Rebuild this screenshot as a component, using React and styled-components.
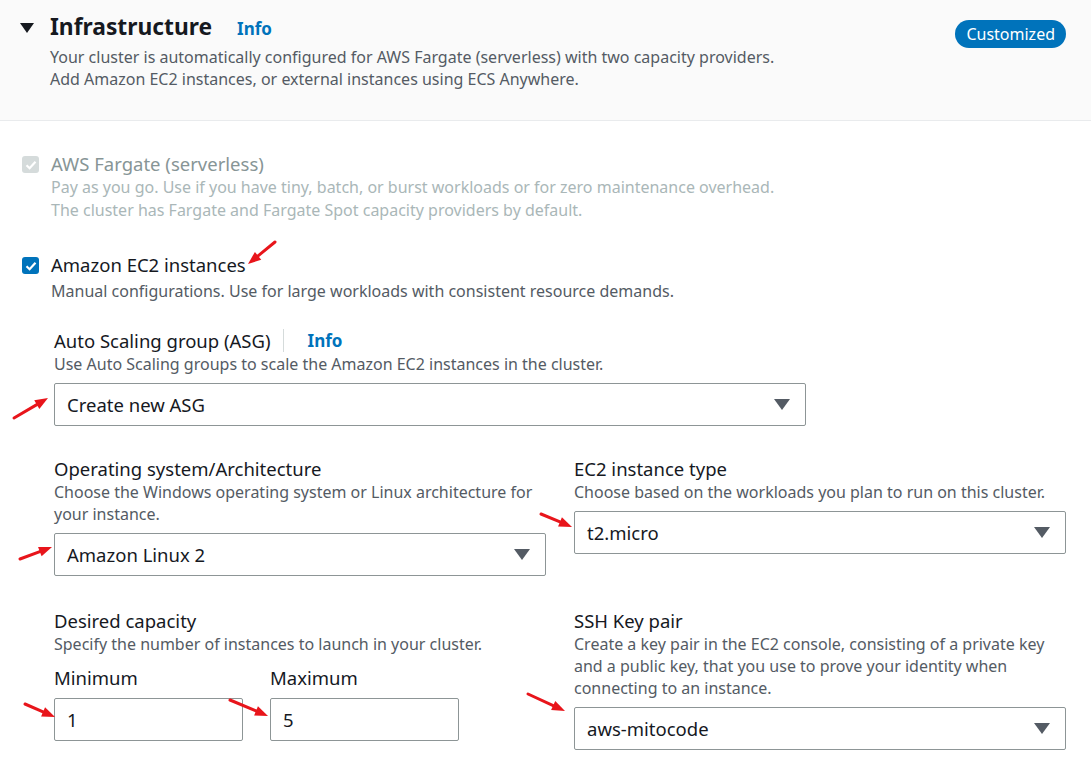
import React from 'react';
import styled, { createGlobalStyle } from 'styled-components';

const GlobalStyle = createGlobalStyle`
	html, body {
		margin: 0;
		padding: 0;
		background: #ffffff;
		font-family: "Noto Sans", "Open Sans", sans-serif;
		color: #16191f;
	}
`;

const Page = styled.div`
	position: relative;
	width: 1091px;
	height: 757px;
	overflow: hidden;
	background: #ffffff;
`;

const Header = styled.div`
	display: flex;
	align-items: flex-start;
	justify-content: space-between;
	height: 121px;
	box-sizing: border-box;
	padding: 12px 25px 0 20px;
	background: #fafafa;
	border-bottom: 1px solid #e9ebed;
`;

const HeaderMain = styled.div`
	display: flex;
	align-items: flex-start;
	gap: 16px;
`;

const Caret = styled.span`
	width: 0;
	height: 0;
	margin-top: 11px;
	border-left: 7px solid transparent;
	border-right: 7px solid transparent;
	border-top: 10px solid #16191f;
`;

const HeaderText = styled.div`
	display: flex;
	flex-direction: column;
`;

const TitleRow = styled.div`
	display: flex;
	align-items: baseline;
	gap: 25px;
`;

const Title = styled.h2`
	margin: 0;
	font-size: 22.8px;
	line-height: 30px;
	font-weight: 700;
`;

const InfoLink = styled.a`
	color: #0073bb;
	font-weight: 700;
	font-size: ${p => p.size || 17}px;
	text-decoration: none;
`;

const Desc = styled.p`
	margin: ${p => p.top || 0}px 0 0;
	font-size: 16px;
	line-height: ${p => p.lh || 22}px;
	color: ${p => (p.disabled ? '#aab7b8' : '#545b64')};
`;

const Badge = styled.span`
	margin-top: 8px;
	padding: 4px 11px 4px;
	border-radius: 16px;
	background: #0073bb;
	color: #ffffff;
	font-size: 16px;
	line-height: 20px;
`;

const Body = styled.div`
	display: flex;
	flex-direction: column;
	padding: 30px 25px 0 22px;
`;

const Option = styled.div`
	display: flex;
	gap: 12px;
	margin-bottom: ${p => p.gap || 0}px;
`;

const Check = styled.span`
	flex: none;
	width: 17px;
	height: 17px;
	margin-top: 5px;
	border-radius: 3px;
	background: ${p => (p.disabled ? '#d5dbdb' : '#0073bb')};
	display: flex;
	align-items: center;
	justify-content: center;
`;

const OptionTitle = styled.div`
	font-size: 18.5px;
	line-height: 25px;
	color: ${p => (p.disabled ? '#879596' : '#16191f')};
`;

const Nested = styled.div`
	display: flex;
	flex-direction: column;
	padding-left: 32px;
`;

const Field = styled.div`
	display: flex;
	flex-direction: column;
`;

const LabelRow = styled.div`
	display: flex;
	align-items: center;
`;

const Label = styled.label`
	font-size: 18.5px;
	line-height: 25px;
	color: #16191f;
`;

const Divider = styled.span`
	width: 1px;
	height: 23px;
	background: #d5dbdb;
	margin: 0 24px 0 12px;
`;

const Select = styled.div`
	display: flex;
	align-items: center;
	justify-content: space-between;
	box-sizing: border-box;
	width: ${p => p.width || '100%'};
	height: 43px;
	margin-top: 8px;
	padding: 0 15px 0 12px;
	border: 1px solid #8d9596;
	border-radius: 2px;
	background: #ffffff;
	font-size: 18.5px;
	color: #16191f;
`;

const Arrow = styled.span`
	width: 0;
	height: 0;
	border-left: 8px solid transparent;
	border-right: 8px solid transparent;
	border-top: 11px solid #545b64;
`;

const Columns = styled.div`
	display: grid;
	grid-template-columns: 492px 492px;
	column-gap: 28px;
	margin-top: ${p => p.top || 0}px;
`;

const Pair = styled.div`
	display: flex;
	gap: 27px;
	margin-top: 10px;
`;

const NumberBox = styled.div`
	display: flex;
	flex-direction: column;
`;

const Input = styled.div`
	box-sizing: border-box;
	width: 189px;
	height: 43px;
	margin-top: 8px;
	padding: 0 12px;
	display: flex;
	align-items: center;
	border: 1px solid #8d9596;
	border-radius: 2px;
	font-size: 18.5px;
`;

const Overlay = styled.svg`
	position: absolute;
	inset: 0;
	pointer-events: none;
`;

function Tick({ color }) {
	return (
		<svg width='12' height='10' viewBox='0 0 12 10'>
			<path d='M1.5 5.2 L4.6 8.2 L10.5 1.8' fill='none' stroke={color} strokeWidth='2.2' />
		</svg>
	);
}

function Dropdown({ value, width }) {
	return (
		<Select width={width}>
			<span>{value}</span>
			<Arrow />
		</Select>
	);
}

const arrows = [
	[275, 242, 248, 264],
	[14, 418, 48, 398],
	[20, 559, 52, 547],
	[541, 514, 572, 527],
	[25, 704, 55, 717],
	[230, 700, 268, 716],
	[528, 694, 565, 711]
];

function Annotations() {
	return (
		<Overlay width='1091' height='757'>
			{arrows.map(([x1, y1, x2, y2], i) => {
				const a = Math.atan2(y2 - y1, x2 - x1);
				const len = 13;
				const w = 5;
				const bx = x2 - len * Math.cos(a);
				const by = y2 - len * Math.sin(a);
				const px = -Math.sin(a) * w;
				const py = Math.cos(a) * w;
				return (
					<g key={i}>
						<line x1={x1} y1={y1} x2={bx} y2={by} stroke='#e8151b' strokeWidth='3' strokeLinecap='round' />
						<polygon points={`${x2},${y2} ${bx + px},${by + py} ${bx - px},${by - py}`} fill='#e8151b' />
					</g>
				);
			})}
		</Overlay>
	);
}

export default function App() {
	return (
		<Page>
			<GlobalStyle />
			<Header>
				<HeaderMain>
					<Caret />
					<HeaderText>
						<TitleRow>
							<Title>Infrastructure</Title>
							<InfoLink>Info</InfoLink>
						</TitleRow>
						<Desc top={4}>
							Your cluster is automatically configured for AWS Fargate (serverless) with two capacity providers.
							<br />
							Add Amazon EC2 instances, or external instances using ECS Anywhere.
						</Desc>
					</HeaderText>
				</HeaderMain>
				<Badge>Customized</Badge>
			</Header>
			<Body>
				<Option gap={30}>
					<Check disabled>
						<Tick color='#ffffff' />
					</Check>
					<div>
						<OptionTitle disabled>AWS Fargate (serverless)</OptionTitle>
						<Desc disabled lh={23}>
							Pay as you go. Use if you have tiny, batch, or burst workloads or for zero maintenance overhead.
							<br />
							The cluster has Fargate and Fargate Spot capacity providers by default.
						</Desc>
					</div>
				</Option>
				<Option gap={26}>
					<Check>
						<Tick color='#ffffff' />
					</Check>
					<div>
						<OptionTitle>Amazon EC2 instances</OptionTitle>
						<Desc top={3}>Manual configurations. Use for large workloads with consistent resource demands.</Desc>
					</div>
				</Option>
				<Nested>
					<Field>
						<LabelRow>
							<Label>Auto Scaling group (ASG)</Label>
							<Divider />
							<InfoLink>Info</InfoLink>
						</LabelRow>
						<Desc>Use Auto Scaling groups to scale the Amazon EC2 instances in the cluster.</Desc>
						<Dropdown value='Create new ASG' width='752px' />
					</Field>
					<Columns top={30}>
						<Field>
							<Label>Operating system/Architecture</Label>
							<Desc>
								Choose the Windows operating system or Linux architecture for your instance.
							</Desc>
							<Dropdown value='Amazon Linux 2' />
						</Field>
						<Field>
							<Label>EC2 instance type</Label>
							<Desc>Choose based on the workloads you plan to run on this cluster.</Desc>
							<Dropdown value='t2.micro' />
						</Field>
					</Columns>
					<Columns top={32}>
						<Field>
							<Label>Desired capacity</Label>
							<Desc>Specify the number of instances to launch in your cluster.</Desc>
							<Pair>
								<NumberBox>
									<Label>Minimum</Label>
									<Input>1</Input>
								</NumberBox>
								<NumberBox>
									<Label>Maximum</Label>
									<Input>5</Input>
								</NumberBox>
							</Pair>
						</Field>
						<Field>
							<Label>SSH Key pair</Label>
							<Desc>
								Create a key pair in the EC2 console, consisting of a private key and a public key, that you use to prove your identity when connecting to an instance.
							</Desc>
							<Dropdown value='aws-mitocode' />
						</Field>
					</Columns>
				</Nested>
			</Body>
			<Annotations />
		</Page>
	);
}
